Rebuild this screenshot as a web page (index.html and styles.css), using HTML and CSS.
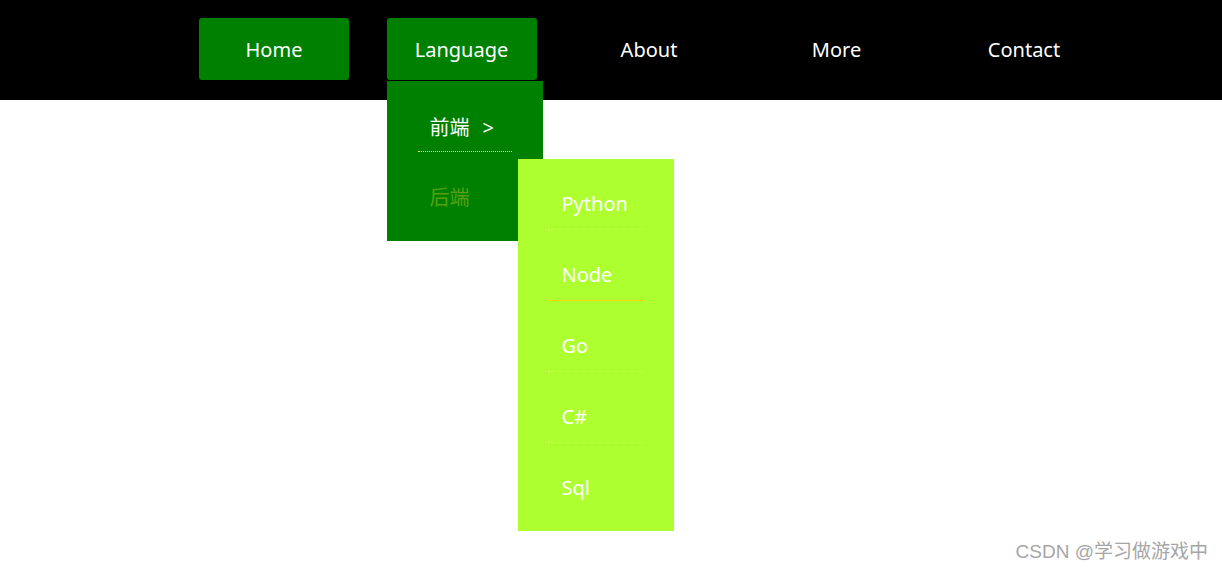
FILE: index.html
```html
<!DOCTYPE html>
<html lang="zh">
<head>
<meta charset="utf-8">
<title>Menu</title>
<link rel="stylesheet" href="styles.css">
</head>
<body>
<header class="topbar">
  <ul class="nav">
    <li class="nav-item active"><a href="#">Home</a></li>
    <li class="nav-item active has-drop">
      <a href="#">Language</a>
      <ul class="drop">
        <li class="drop-item first"><span>前端</span><span class="arrow">&gt;</span>
          <ul class="sub">
            <li class="sub-item faint">Python</li>
            <li class="sub-item bright">Node</li>
            <li class="sub-item faint">Go</li>
            <li class="sub-item faint">C#</li>
            <li class="sub-item last">Sql</li>
          </ul>
        </li>
        <li class="drop-item dim">后端</li>
      </ul>
    </li>
    <li class="nav-item"><a href="#">About</a></li>
    <li class="nav-item"><a href="#">More</a></li>
    <li class="nav-item"><a href="#">Contact</a></li>
  </ul>
</header>
<div class="watermark">CSDN @学习做游戏中</div>
</body>
</html>
```
FILE: styles.css
```css
html, body {
  margin: 0;
  padding: 0;
  background: #fff;
}
body {
  font-family: "Noto Sans", "Noto Sans CJK SC", sans-serif;
  height: 571px;
  position: relative;
  overflow: hidden;
}
ul {
  list-style: none;
  margin: 0;
  padding: 0;
}
.topbar {
  background: #000;
  height: 100px;
}
.nav {
  display: flex;
  padding: 18px 0 0 199px;
  gap: 37.5px;
}
.nav-item {
  width: 150px;
  height: 62px;
  position: relative;
  border-radius: 3px;
}
.nav-item.active {
  background: #008000;
}
.nav-item > a {
  display: block;
  height: 62px;
  line-height: 64px;
  text-align: center;
  color: #fff;
  text-decoration: none;
  font-size: 20px;
}
.drop {
  position: absolute;
  left: 0;
  top: 63px;
  width: 94px;
  height: 138px;
  padding: 22px 31px 0;
  background: #008000;
  z-index: 2;
}
.drop-item {
  position: relative;
  line-height: 48px;
  height: 48px;
  padding-left: 12px;
  color: #fff;
  font-size: 20px;
  font-family: "Noto Sans CJK SC", sans-serif;
}
.drop-item.first {
  border-bottom: 1px dotted #ffff00;
}
.drop-item .arrow {
  margin-left: 13px;
  font-family: "Noto Sans", sans-serif;
}
.drop-item.dim {
  margin-top: 21px;
  color: #55a010;
}
.sub {
  position: absolute;
  left: 100px;
  top: 56px;
  width: 96px;
  height: 372px;
  padding: 0 30px;
  background: #adff2f;
  z-index: 3;
}
.sub-item {
  position: relative;
  padding: 20px 0 0 14px;
  line-height: 50px;
  height: 50px;
  color: #fff;
  font-size: 20px;
  font-family: "Noto Sans", sans-serif;
  border-bottom: 1px solid transparent;
}
.sub-item.faint {
  border-bottom: 1px dotted #fff6a8;
}
.sub-item.bright::after {
  content: "";
  position: absolute;
  left: 0;
  right: 0;
  bottom: -1px;
  height: 1px;
  background: repeating-linear-gradient(to right, #ffd400 0 1px, transparent 1px 2px);
}
.watermark {
  position: absolute;
  right: 14px;
  bottom: 8px;
  font-family: "Liberation Sans", "Noto Sans CJK SC", sans-serif;
  font-size: 19px;
  color: #a6a6a6;
}
```
